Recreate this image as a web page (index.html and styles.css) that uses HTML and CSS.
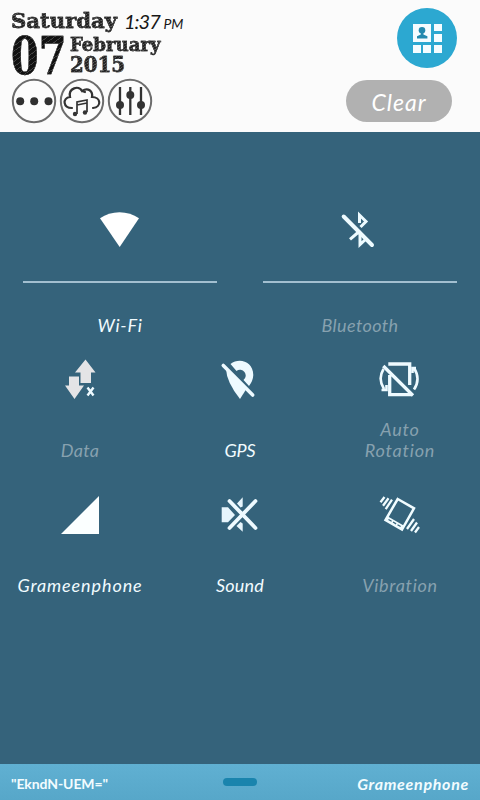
FILE: index.html
```html
<!DOCTYPE html>
<html lang="en">
<head>
<meta charset="utf-8">
<title>Quick settings</title>
<link rel="stylesheet" href="styles.css">
</head>
<body>
<header class="header">
  <div class="clock">
    <div class="line"><span class="sketch weekday">Saturday</span><span class="time">1:37 <small>PM</small></span></div>
    <div class="date">
      <span class="sketch day">07</span>
      <div class="monthyear"><span class="sketch month">February</span><span class="sketch year">2015</span></div>
    </div>
    <div class="shortcuts">
      <svg width="46" height="46" viewBox="0 0 46 46"><circle class="ring" cx="23" cy="23" r="21.2"/><g fill="#303030"><circle cx="9.2" cy="23.2" r="4"/><circle cx="23.2" cy="23.2" r="4"/><circle cx="37.5" cy="23.2" r="4"/></g></svg>
      <svg width="46" height="46" viewBox="0 0 46 46"><circle class="ring" cx="23" cy="23" r="21.2"/><path d="M13 30C4 30 3 20 11 19C9 10 20 7 23 13C29 9 34 13 33 19C42 19 43 29 34 30M23 13L26 14" fill="none" stroke="#333" stroke-width="2.2" stroke-linecap="round"/><path d="M18 36V24L28 22V34M18 27L28 25" fill="none" stroke="#333" stroke-width="1.7"/><circle cx="16" cy="36" r="2.2" fill="#333"/><circle cx="26" cy="34.5" r="2.2" fill="#333"/></svg>
      <svg width="46" height="46" viewBox="0 0 46 46"><circle class="ring" cx="23" cy="23" r="21.2"/><path d="M13 9V37M23.3 9V37M34 9V37" stroke="#333" stroke-width="2.3"/><g fill="#333"><circle cx="13" cy="27" r="4"/><circle cx="23.3" cy="17" r="4"/><circle cx="34" cy="27" r="4"/></g></svg>
    </div>
  </div>
  <div class="actions">
    <svg class="panelbtn" width="60" height="60" viewBox="0 0 60 60"><circle cx="30" cy="30" r="30" fill="#2ca8d1"/><g fill="#f5fcff"><path d="M16 16h18v18H16zM37 16h8v7h-8zM37 26h8v8h-8zM16 37h8v8h-8zM26 37h8v8h-8zM37 37h8v8h-8z"/></g><circle cx="25" cy="22.3" r="3.3" fill="#2389ae"/><path d="M23.8 24h2.6v2.5l4 1.7v2.3H20v-2.3l3.8-1.7z" fill="#2389ae"/></svg>
    <button class="clear">Clear</button>
  </div>
</header>
<main class="panel">
  <section class="row wide">
    <div class="tile on"><div class="iconbox"><svg width="44" height="44" viewBox="0 0 44 44"><path d="M2 10.3C13 2.300 30 2.300 41 10.300L21.700 39Z" fill="#fff"/></svg></div><span class="label w-wifi">Wi-Fi</span></div>
    <div class="tile"><div class="iconbox"><svg width="44" height="44" viewBox="0 0 44 44"><g fill="none" stroke="#eefbff" stroke-width="3"><path d="M21.500 15V7L28 13.500L22.500 19M12 31.300L20 24.500M22 25V36.500L27.500 31.500"/><path d="M5.700 8.500L34 37" stroke-width="4" stroke-linecap="round"/></g></svg></div><span class="label w-blue">Bluetooth</span></div>
  </section>
  <section class="row">
    <div class="tile"><svg width="44" height="44" viewBox="0 0 44 44"><path d="M27.500 1.500L37.500 14.500H33V25H22.500V14.500H17Z" fill="#e4e4e6"/><path d="M11 18.500H21V27.500H26L16.500 41L7 27.500H11Z" fill="#e4e4e6"/><path d="M29.500 29.500L35.500 37.500M35.500 29.500L29.500 37.500" stroke="#eefaff" stroke-width="2.400"/></svg><span class="label w-data">Data</span></div>
    <div class="tile on"><svg width="44" height="44" viewBox="0 0 44 44"><path d="M12.500 6C21-.5 35 3 35.300 17Q35 23 31 28L25.500 22A5 5 0 1 0 18.500 13Z" fill="#eefaff"/><path d="M5 7.500L35 37.500" stroke="#35637b" stroke-width="6.200"/><path d="M5.300 7.500L34.700 37" stroke="#eefaff" stroke-width="3.600" stroke-linecap="round"/><path d="M8 11L28 31.500L22 41Q8.500 24 8 11Z" fill="#eefaff"/></svg><span class="label w-gps">GPS</span></div>
    <div class="tile"><svg width="44" height="44" viewBox="0 0 44 44"><g fill="none" stroke="#eefaff" stroke-width="3.300"><path d="M5.300 8L35 37.500M10.300 6H31.700V27M11.700 17V36.700H34"/><path d="M5.500 11Q-.5 21 6 31M3.500 32H8.500V27M36 10Q43 21 36 31.500M34.500 15V10H38" stroke-width="2.600"/></g></svg><span class="label w-auto">Auto</span><span class="label second w-rot">Rotation</span></div>
  </section>
  <section class="row">
    <div class="tile on"><svg width="44" height="44" viewBox="0 0 44 44"><path d="M41 3V41H3Z" fill="#fbffff"/></svg><span class="label w-gram">Grameenphone</span></div>
    <div class="tile on"><svg width="44" height="44" viewBox="0 0 44 44"><path d="M3.700 14.300H10L17 22L10 29.300H3.700ZM19 10.500L24.700 4.300V13.500L22.500 14.500ZM18.500 33L22.500 29L24.700 30.500V38.700Z" fill="#e7f5fc"/><path d="M11.500 8L37.500 35M37.500 8L11.500 35" stroke="#eefaff" stroke-width="3.800" stroke-linecap="round"/></svg><span class="label w-sound">Sound</span></div>
    <div class="tile"><svg width="44" height="44" viewBox="0 0 44 44"><g fill="none" stroke="#f1fcff"><path d="M19.700 6L36 15.300L24 36.500L7.500 27Z" stroke-width="2.500"/><path d="M8.800 25.500L24.500 34.500" stroke-width="4.500"/><path d="M2.500 9.300L6.500 4M5 12.700L10.500 5.300M7.700 16.200L14 6.700M29 36L36 26M33 38L39 29.500M37 39.500L41 34" stroke-width="2.300"/></g><path d="M10.500 26.500L23 33.700" stroke="#35637b" stroke-width="1.200" stroke-dasharray="3.600 1.600"/></svg><span class="label w-vib">Vibration</span></div>
  </section>
</main>
<footer class="footer">
  <span class="network">"EkndN-UEM="</span><span class="handle"></span><span class="carrier">Grameenphone</span>
</footer>
</body>
</html>
```
FILE: styles.css
```css
* { box-sizing: border-box; }
body {
  margin: 0;
  width: 480px;
  height: 800px;
  overflow: hidden;
  display: flex;
  flex-direction: column;
  background: #35637b;
  font-family: Lato, "Liberation Sans", sans-serif;
}
svg { display: block; flex: none; }
.header {
  height: 132px;
  flex: none;
  background: #fbfbfb;
  display: flex;
  justify-content: space-between;
}
.clock { padding: 9px 0 0 11px; }
.line { display: flex; height: 24px; }
.sketch {
  display: block;
  font-family: "DejaVu Serif Condensed", "DejaVu Serif", serif;
  font-stretch: condensed;
  font-weight: bold;
  color: transparent;
  background: repeating-linear-gradient(148deg, #222 0 1.4px, #5c5c5c 2px 2.4px);
  -webkit-background-clip: text;
  background-clip: text;
  -webkit-text-stroke: .4px #333;
  transform-origin: 0 0;
  white-space: nowrap;
}
.weekday { font-size: 21px; line-height: 24px; width: 97px; margin-right: 16px; transform: scaleX(1.12); }
.time { font: italic 20px/25px Lato, sans-serif; color: #171717; letter-spacing: -1px; white-space: nowrap; }
.time small { font-size: 14px; letter-spacing: 0; }
.date { display: flex; height: 45px; }
.day {
  font-size: 52px;
  line-height: 45px;
  width: 68px;
  margin-right: -9px;
  transform: scaleX(.85);
  background-image: repeating-linear-gradient(148deg, #111 0 3.4px, #444 3.8px 4.4px);
}
.monthyear { display: flex; flex-direction: column; align-items: flex-start; padding-top: 2px; }
.month { font-size: 18px; line-height: 20px; transform: scaleX(1.12); }
.year { font-size: 22px; line-height: 19px; }
.shortcuts { display: flex; gap: 2px; }
.ring { fill: #fcfcfc; stroke: #6c6c6c; stroke-width: 2; }
.actions { display: flex; flex-direction: column; align-items: flex-end; padding: 8px 28px 0 0; gap: 12px; }
.panelbtn { margin-right: -5px; }
.clear {
  width: 106px;
  height: 42px;
  border: 0;
  padding: 2px 0 0;
  border-radius: 21px;
  background: #b1b1b1;
  color: #fff;
  font: italic 23px/40px Lato, sans-serif;
  letter-spacing: 1px;
}
.panel { flex: 1; padding-top: 76px; }
.row { display: grid; grid-template-columns: repeat(3, 1fr); height: 135px; padding-top: 8px; }
.row.wide { grid-template-columns: repeat(2, 194px); gap: 46px; padding: 0 23px; height: 142px; }
.tile { display: flex; flex-direction: column; align-items: center; color: #87a1af; }
.tile.on { color: #f1fbff; }
.iconbox { width: 100%; height: 75px; border-bottom: 2px solid #a3bfd0; display: flex; justify-content: center; }
.wide .label { margin-top: 32px; }
.row:not(.wide) .tile > svg { margin-bottom: 38px; }
.row:not(.wide) .tile > svg:has(~ .second) { margin-bottom: 17px; }
.label { font-size: 18px; font-style: italic; line-height: 21px; white-space: nowrap; }
.w-wifi { letter-spacing: .8px; }
.w-blue { letter-spacing: .4px; }
.w-data { letter-spacing: .3px; }
.w-gps { letter-spacing: -.2px; }
.w-auto, .w-rot { letter-spacing: .8px; }
.w-gram { letter-spacing: .9px; }
.w-sound { letter-spacing: .2px; }
.w-vib { letter-spacing: .7px; }
.footer {
  height: 36px;
  flex: none;
  display: grid;
  grid-template-columns: 1fr 34px 1fr;
  align-items: center;
  padding: 0 11px;
  background: linear-gradient(#60b0d2, #57a7c9);
  color: #f2fcff;
}
.network { font-weight: bold; font-size: 14px; letter-spacing: -.1px; padding-top: 3px; }
.handle { height: 8px; border-radius: 4px; background: #1a84ad; }
.carrier { justify-self: end; font-weight: bold; font-style: italic; font-size: 16px; letter-spacing: .7px; padding-top: 2px; }
```
